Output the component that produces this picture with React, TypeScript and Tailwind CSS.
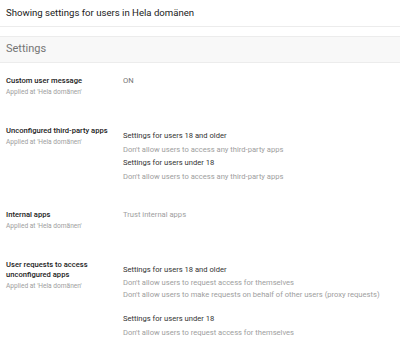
const Label = ({ lines }: { lines: string[] }) => (
  <div className="w-[117px] shrink-0">
    {lines.map((l) => (
      <p key={l} className="text-[7.6px] leading-[10px] font-medium text-[#212121]">
        {l}
      </p>
    ))}
    <p className="mt-[1px] text-[6.6px] leading-[11px] text-[#9e9e9e]">Applied at 'Hela domänen'</p>
  </div>
);

export default function App() {
  return (
    <div className="w-[400px] h-[348px] bg-white overflow-hidden font-['Roboto',sans-serif]">
      {/* Top bar */}
      <div className="h-[27px] border-b border-[#ececec] px-[6px] flex items-center">
        <p className="text-[9.6px] text-[#212121]">Showing settings for users in Hela domänen</p>
      </div>

      {/* Section header */}
      <div className="mt-[9px] h-[27px] border-y border-[#ececec] bg-[#f8f8f8] px-[6px] flex items-center">
        <p className="text-[11px] text-[#757575]">Settings</p>
      </div>

      <div className="px-[6px]">
        {/* Custom user message */}
        <div className="mt-[13px] flex">
          <Label lines={['Custom user message']} />
          <p className="text-[7.6px] leading-[10px] text-[#757575]">ON</p>
        </div>

        {/* Unconfigured third-party apps */}
        <div className="mt-[28px] flex">
          <Label lines={['Unconfigured third-party apps']} />
          <div className="pt-[3px] text-[7.6px] leading-[13.5px]">
            <p className="text-[#333333]">Settings for users 18 and older</p>
            <p className="text-[#9e9e9e]">Don't allow users to access any third-party apps</p>
            <p className="text-[#333333]">Settings for users under 18</p>
            <p className="text-[#9e9e9e]">Don't allow users to access any third-party apps</p>
          </div>
        </div>

        {/* Internal apps */}
        <div className="mt-[27px] flex">
          <Label lines={['Internal apps']} />
          <p className="text-[7.6px] leading-[10px] text-[#9e9e9e]">Trust internal apps</p>
        </div>

        {/* User requests */}
        <div className="mt-[28px] flex">
          <Label lines={['User requests to access', 'unconfigured apps']} />
          <div className="pt-[3px] text-[7.6px]">
            <p className="leading-[13px] text-[#333333]">Settings for users 18 and older</p>
            <p className="mt-[1px] leading-[12px] text-[#9e9e9e]">Don't allow users to request access for themselves</p>
            <p className="leading-[12px] text-[#9e9e9e]">
              Don't allow users to make requests on behalf of other users (proxy requests)
            </p>
            <p className="mt-[11px] leading-[13px] text-[#333333]">Settings for users under 18</p>
            <p className="mt-[2px] leading-[12px] text-[#9e9e9e]">Don't allow users to request access for themselves</p>
          </div>
        </div>
      </div>
    </div>
  );
}
